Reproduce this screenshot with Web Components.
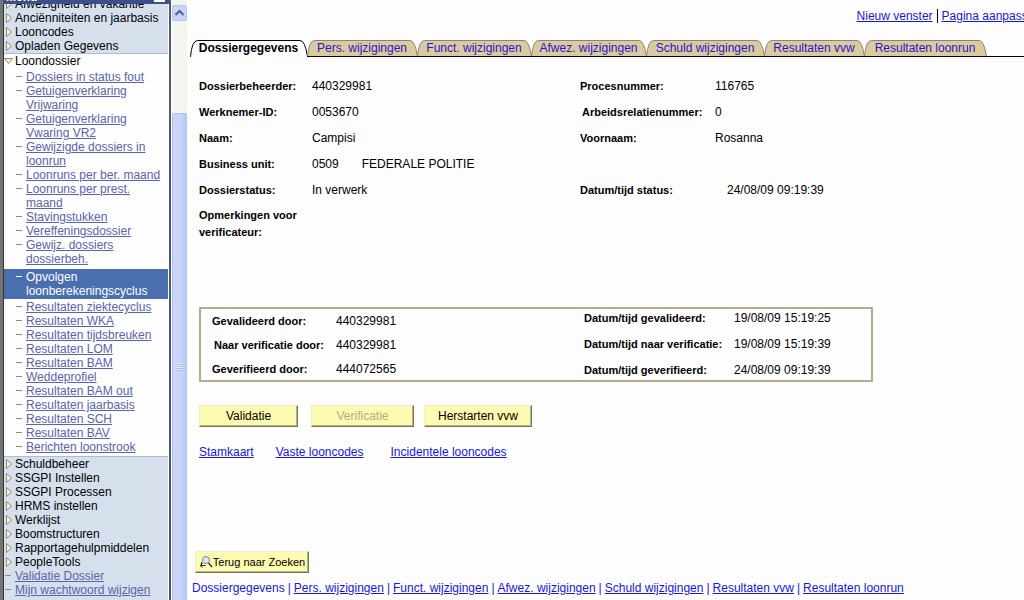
<!DOCTYPE html>
<html lang="nl">
<head>
<meta charset="utf-8">
<title>Loondossier - Opvolgen loonberekeningscyclus</title>
<style>
html,body{margin:0;height:100%;overflow:hidden}
body{font:12px/14px "Liberation Sans",Arial,sans-serif;color:#000;background:#fdfdfe}
</style>
</head>
<body>
<app-frame>
  <side-menu slot="side"></side-menu>
  <scroll-bar slot="side"></scroll-bar>
  <page-links></page-links>
  <tab-bar></tab-bar>
  <dossier-form></dossier-form>
  <status-box></status-box>
  <action-bar></action-bar>
  <page-footer></page-footer>
</app-frame>
<script>
const define = (name, html, setup) => customElements.define(name, class extends HTMLElement {
  constructor() {
    super();
    this.attachShadow({mode: 'open'}).innerHTML = html;
  }
  connectedCallback() { if (setup) setup(this); }
});

define('app-frame', `<style>
:host{display:flex;height:100vh;overflow:hidden}
.side{display:flex;flex:none}
main{flex:1;min-width:0;display:flex;flex-direction:column;overflow:hidden;padding-left:3px}
</style><div class="side"><slot name="side"></slot></div><main><slot></slot></main>`);

define('menu-item', `<style>
:host{display:flex}
.mark{flex:none;width:11px;height:14px}
svg{display:block}
a{color:inherit;text-decoration:none}
:host([kind=link]) a{color:#5a64a8;text-decoration:underline}
:host([kind=link]){--line:#8e8c7c}
:host([nested]){padding-left:11px}
:host([selected]){background:#4a6fae;--line:#fff;padding-top:1px;padding-bottom:1px}
:host([selected]) a{color:#fff;text-decoration:none}
</style><span class="mark"></span><a href="#"><slot></slot></a>`, el => {
  const marks = {
    folder: '<path d="M2.5 2.5v9l5-4.5z" fill="#f6f3df" stroke="#8f8c70"/>',
    open: '<path d="M.5 4.5h8l-4 5z" fill="#f6f3df" stroke="#8f8c70"/>',
    link: '<path d="M1 6.5h6" stroke="var(--line)"/>'
  };
  el.shadowRoot.querySelector('.mark').innerHTML =
    '<svg width="11" height="14" viewBox="0 0 11 14">' + marks[el.getAttribute('kind')] + '</svg>';
});

define('side-menu', `<style>
:host{display:flex;flex-direction:column;width:165px;height:100vh;overflow:hidden;border-left:3px solid #747474;border-right:2px solid #54586c;padding-right:1px;box-shadow:inset 1px 0 #333;background:#fdfdfe}
header{flex:none;height:4px;overflow:hidden;display:flex;align-items:flex-end;justify-content:space-between;background:#3d4f8b;color:#fff;font-weight:bold;padding:0 4px 0 3px;margin-right:-1px}
header i{width:11px;height:2px;background:#fff;margin-bottom:2px}
nav{flex:1;min-height:0;overflow:hidden;display:flex;flex-direction:column;margin-left:1px}
section{flex:none}
.top,.bottom{background:#d6dfec}
.top{margin-top:-7px;border-bottom:1px solid #a9bcd8}
.first{padding:2px 0 3px}
.last{padding:1px 0 2px}
.bottom{border-top:1px solid #a9bcd8;padding-bottom:8px}
</style><header><b>Menu</b><i></i></header><nav aria-label="Menu">
<section class="top"></section><section class="open"></section><section class="first"></section><section class="current"></section><section class="last"></section><section class="bottom"></section></nav>`, el => {
  const fill = (cls, texts, attrs) => {
    el.shadowRoot.querySelector('.' + cls).innerHTML +=
      texts.map(t => `<menu-item ${attrs}>${t}</menu-item>`).join('');
  };
  fill('top', ['Afwezigheid en vakantie', 'Anciënniteiten en jaarbasis', 'Looncodes', 'Opladen Gegevens'], 'kind="folder"');
  fill('open', ['Loondossier'], 'kind="open"');
  fill('first', ['Dossiers in status fout', 'Getuigenverklaring<br>Vrijwaring', 'Getuigenverklaring<br>Vwaring VR2',
    'Gewijzigde dossiers in<br>loonrun', 'Loonruns per ber. maand', 'Loonruns per prest.<br>maand', 'Stavingstukken',
    'Vereffeningsdossier', 'Gewijz. dossiers<br>dossierbeh.'], 'kind="link" nested');
  fill('current', ['Opvolgen<br>loonberekeningscyclus'], 'kind="link" nested selected');
  fill('last', ['Resultaten ziektecyclus', 'Resultaten WKA', 'Resultaten tijdsbreuken', 'Resultaten LOM', 'Resultaten BAM',
    'Weddeprofiel', 'Resultaten BAM out', 'Resultaten jaarbasis', 'Resultaten SCH', 'Resultaten BAV', 'Berichten loonstrook'],
    'kind="link" nested');
  fill('bottom', ['Schuldbeheer', 'SSGPI Instellen', 'SSGPI Processen', 'HRMS instellen', 'Werklijst', 'Boomstructuren',
    'Rapportagehulpmiddelen', 'PeopleTools'], 'kind="folder"');
  fill('bottom', ['Validatie Dossier', 'Mijn wachtwoord wijzigen'], 'kind="link"');
});

define('scroll-bar', `<style>
:host{display:flex;flex-direction:column;width:15px;padding-top:5px;margin-left:1px;background:#f5f4ef;box-sizing:border-box;height:100vh}
button{flex:none;width:15px;height:16px;padding:0;border:1px solid #b5c6f2;border-radius:2px;background:#c6d4fb}
svg{display:block}
.track{flex:1;display:flex;flex-direction:column;padding-top:92px}
.thumb{flex:1;display:flex;justify-content:center;background:linear-gradient(90deg,#c8d6fb 60%,#b4c6f5);border:1px solid #b0c2f0;border-bottom:0;border-radius:2px 2px 0 0;padding-top:249px}
.grip{width:7px;height:8px;background:repeating-linear-gradient(#e8effe 0 1px,#a8bcec 1px 2px)}
</style><button aria-label="Omhoog"><svg width="13" height="14" viewBox="0 0 13 14"><path d="M2.5 9l4-4 4 4" fill="none" stroke="#4d6185" stroke-width="2"/></svg></button>
<div class="track"><div class="thumb"><div class="grip"></div></div></div>`);

define('page-links', `<style>
:host{display:flex;justify-content:flex-end;height:39px;box-sizing:border-box;padding-top:9px;white-space:nowrap;margin-right:-17px}
a{color:#1717d8}
i{width:1px;height:14px;background:#000;margin:0 4px}
</style><a href="#">Nieuw venster</a><i></i><a href="#">Pagina aanpassen</a>`);

define('tab-bar', `<style>
:host{display:block;border-bottom:1px solid #000}
nav{display:flex;margin-bottom:-1px}
a{position:relative;box-sizing:border-box;height:18px;padding-top:2px;text-align:center;text-decoration:none;color:#2a16c8;white-space:nowrap;flex:none}
a svg{position:absolute;left:0;top:0;width:100%;height:18px;overflow:visible}
a span{position:relative}
a.on{color:#000;font-weight:bold}
</style><nav></nav>`, el => {
  const nav = el.shadowRoot.querySelector('nav');
  [['Dossiergegevens', 117], ['Pers. wijzigingen', 110], ['Funct. wijzigingen', 114], ['Afwez. wijzigingen', 115],
   ['Schuld wijzigingen', 118], ['Resultaten vvw', 100], ['Resultaten loonrun', 122]].forEach(([t, w], i) => {
    const a = document.createElement('a');
    a.href = '#';
    a.style.width = w + 'px';
    if (!i) a.className = 'on';
    const top = `M.5 17.5Q2 1.5 7.5 1.5H${w - 7}Q${w - 2} 1.5 ${w}.5 17.5`;
    a.innerHTML = `<svg><path d="${top}" fill="${i ? '#dbc9a0' : '#fdfdfe'}" stroke="${i ? '#8a8478' : '#000'}"/>${
      i ? `<path d="M0 17.5H${w + 1}" stroke="#000"/>` : `<path d="M1 17.5H${w}" stroke="#fdfdfe"/>`}</svg><span>${t}</span>`;
    nav.append(a);
  });
});

define('dossier-form', `<style>
:host{display:block;padding:16px 0 0 9px;height:250px;box-sizing:border-box}
dl{margin:0;display:grid;grid-template-columns:113px 268px 135px 1fr;grid-auto-rows:26px;align-items:center;white-space:nowrap}
dt{font-weight:bold;font-size:11px}
dd{margin:0}
dd span{margin-right:23px}
.wide{grid-column:2/-1}
.in{padding-left:12px}
.inset{padding-left:2px}
.note{line-height:17px;white-space:normal;align-self:start;padding-top:4px}
</style><dl>
<dt>Dossierbeheerder:</dt><dd>440329981</dd><dt>Procesnummer:</dt><dd>116765</dd>
<dt>Werknemer-ID:</dt><dd>0053670</dd><dt class="inset">Arbeidsrelatienummer:</dt><dd>0</dd>
<dt>Naam:</dt><dd>Campisi</dd><dt>Voornaam:</dt><dd>Rosanna</dd>
<dt>Business unit:</dt><dd class="wide"><span>0509</span>FEDERALE POLITIE</dd>
<dt>Dossierstatus:</dt><dd>In verwerk</dd><dt>Datum/tijd status:</dt><dd class="in">24/08/09 09:19:39</dd>
<dt class="note">Opmerkingen voor verificateur:</dt><dd></dd>
</dl>`);

define('status-box', `<style>
:host{display:grid;grid-template-columns:372px 1fr;box-sizing:border-box;max-width:674px;height:75px;margin:0 8px 0 9px;border:2px solid #b5aa8a;padding-left:11px;white-space:nowrap}
dl{margin:0;display:grid;grid-template-columns:124px 1fr;align-items:center;align-content:start}
.left{grid-auto-rows:24px}
.right{grid-template-columns:150px 1fr;grid-auto-rows:26px;margin-top:-4px}
dt{font-weight:bold;font-size:11px}
dd{margin:0}
.inset{padding-left:2px}
</style><dl class="left">
<dt>Gevalideerd door:</dt><dd>440329981</dd>
<dt class="inset">Naar verificatie door:</dt><dd>440329981</dd>
<dt>Geverifieerd door:</dt><dd>444072565</dd></dl>
<dl class="right">
<dt>Datum/tijd gevalideerd:</dt><dd>19/08/09 15:19:25</dd>
<dt>Datum/tijd naar verificatie:</dt><dd>19/08/09 15:19:39</dd>
<dt>Datum/tijd geverifieerd:</dt><dd>24/08/09 09:19:39</dd></dl>`);

define('push-button', `<style>
:host{display:block}
button{display:flex;align-items:center;justify-content:center;width:100%;height:22px;padding:0;font:inherit;color:#000;background:#fdfbb0;border:1px solid;border-color:#eeeccb #77745c #77745c #eeeccb;box-shadow:inset -1px -1px #b5b183;white-space:nowrap}
button:disabled{color:#b0ad84}
</style><button><slot></slot></button>`, el => {
  el.shadowRoot.querySelector('button').disabled = el.hasAttribute('disabled');
});

define('action-bar', `<style>
:host{display:block;padding:23px 0 0 9px}
.row{display:flex}
.a{width:99px;margin-right:13px}
.b{width:103px;margin-right:10px}
.c{width:108px}
a{color:#1717d8;margin-right:22px}
a+a{margin-right:27px}
.links{padding-top:18px}
</style><div class="row"><push-button class="a">Validatie</push-button><push-button class="b" disabled>Verificatie</push-button><push-button class="c">Herstarten vvw</push-button></div>
<div class="row links"><a href="#">Stamkaart</a><a href="#">Vaste looncodes</a><a href="#">Incidentele looncodes</a></div>`);

define('page-footer', `<style>
:host{display:block;margin-top:auto;padding:0 0 5px 2px;color:#1717d8;white-space:nowrap}
push-button{width:114px;margin:0 0 8px 3px;font-size:11px}
a{color:inherit}
nav{display:flex;gap:3px}
svg{flex:none}
</style><push-button><svg width="14" height="14" viewBox="0 0 14 14" fill="none"><circle cx="7" cy="5" r="3.5" fill="#d9ecf5" stroke="#768a98"/><path d="M9.500 8l3.500 4" stroke="#333" stroke-width="1.500"/><path d="M2.500 7v3.500h4M3.500 8.500l-2.500 2 2.500 2" stroke="#222"/></svg>Terug naar Zoeken</push-button>
<nav><span>Dossiergegevens</span>|<a href="#">Pers. wijzigingen</a>|<a href="#">Funct. wijzigingen</a>|<a href="#">Afwez. wijzigingen</a>|<a href="#">Schuld wijzigingen</a>|<a href="#">Resultaten vvw</a>|<a href="#">Resultaten loonrun</a></nav>`);
</script>
</body>
</html>
